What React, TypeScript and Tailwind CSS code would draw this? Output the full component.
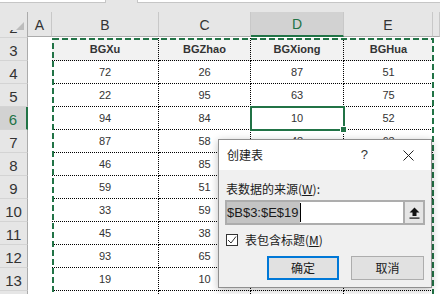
import clsx from "clsx";

const COLS = "grid grid-cols-[28px_24px_107px_92px_93px_89px_1fr]";

const data = [
  [72, 26, 87, 51],
  [22, 95, 63, 75],
  [94, 84, 10, 52],
  [87, 58, 48, 63],
  [46, 85, 31, 72],
  [59, 51, 66, 24],
  [33, 59, 17, 80],
  [45, 38, 92, 41],
  [93, 65, 55, 36],
  [19, 10, 28, 69],
  [64, 77, 12, 90],
];

function RowHead({ n, selected }: { n: number; selected?: boolean }) {
  return (
    <div
      className={clsx(
        "flex items-end justify-center border-b border-[#d4d4d4] text-[15px] leading-[18px]",
        selected
          ? "bg-[#d2d2d2] border-r-2 border-r-[#217346] text-[#217346]"
          : "bg-[#e6e6e6] border-r border-r-[#ababab] text-[#333]"
      )}
    >
      {n}
    </div>
  );
}

function Cell({ children, head, last }: { children?: React.ReactNode; head?: boolean; last?: boolean }) {
  return (
    <div
      className={clsx(
        "flex items-center justify-center border-b border-dotted border-black text-[11px] text-[#333]",
        !last && "border-r",
        head && "bg-[#f2f2f2] font-bold text-[#3a3a3a]"
      )}
    >
      {children}
    </div>
  );
}

function ColHead({ label, selected, edge }: { label?: string; selected?: boolean; edge?: boolean }) {
  return (
    <div
      className={clsx(
        "flex items-center justify-center pt-[2px] text-[14px] border-r",
        selected
          ? "bg-[#d2d2d2] border-b-2 border-b-[#217346] text-[#217346] border-r-[#ababab]"
          : "bg-[#e6e6e6] border-b border-b-[#ababab] text-[#333]",
        edge ? "border-r-[#ababab]" : "border-r-[#c8c8c8]"
      )}
    >
      {label}
    </div>
  );
}

export default function App() {
  return (
    <div className="relative w-[440px] h-[294px] overflow-hidden bg-white font-['Liberation_Sans',Arial,sans-serif]">
      {/* formula bar remnant */}
      <div className="flex h-[12px] bg-[#e6e6e6]">
        <div className="w-[106px] h-[3px] bg-white border-b border-r border-[#c6c6c6]" />
        <div className="ml-[31px] flex-1 h-[3px] bg-white border-b border-l border-[#c6c6c6]" />
      </div>

      {/* column headers */}
      <div className={clsx(COLS, "h-[18px]")}>
        <div className="flex items-end justify-end pr-[3px] pb-[3px] bg-[#e6e6e6] border-r border-b border-[#ababab]">
          <svg width="11" height="11" viewBox="0 0 11 11">
            <polygon points="11,0 11,11 0,11" fill="#bcbcbc" />
          </svg>
        </div>
        <ColHead label="A" />
        <ColHead label="B" />
        <ColHead label="C" />
        <ColHead label="D" selected />
        <ColHead label="E" />
        <ColHead />
      </div>

      {/* row 2, mostly scrolled away */}
      <div className="h-[8px] overflow-hidden">
        <div className={clsx(COLS, "h-[23px] -mt-[15px]")}>
          <RowHead n={2} />
        </div>
      </div>

      {/* row 3: table headers */}
      <div className={clsx(COLS, "h-[23px]")}>
        <RowHead n={3} />
        <div />
        <Cell head>BGXu</Cell>
        <Cell head>BGZhao</Cell>
        <Cell head>BGXiong</Cell>
        <Cell head last>BGHua</Cell>
        <div />
      </div>

      {data.map((r, i) => (
        <div key={i} className={clsx(COLS, "h-[23px]")}>
          <RowHead n={i + 4} selected={i + 4 === 6} />
          <div />
          <Cell>{r[0]}</Cell>
          <Cell>{r[1]}</Cell>
          <Cell>{r[2]}</Cell>
          <Cell last>{r[3]}</Cell>
          <div />
        </div>
      ))}

      {/* copy range marching ants */}
      <svg className="absolute left-[52px] top-[38px]" width="382" height="260">
        <rect x="1" y="1" width="380" height="300" fill="none" stroke="#217346" strokeWidth="2" strokeDasharray="6 3" />
      </svg>

      {/* active cell D6 */}
      <div className="absolute left-[250px] top-[106px] w-[95px] h-[25px] border-2 border-[#217346]">
        <div className="absolute -right-[4px] -bottom-[4px] w-[7px] h-[7px] bg-[#217346] border border-white" />
      </div>

      {/* dialog */}
      <div className="absolute left-[218px] top-[139px] w-[214px] h-[149px] flex flex-col border border-[#8f8f8f] bg-[#f0f0f0] shadow-[0_2px_8px_rgba(0,0,0,0.25)] font-['Noto_Sans_CJK_SC',sans-serif] text-[#1a1a1a]">
        <div className="h-[30px] flex items-center bg-white pl-[8px] pr-[17px] text-[12px]">
          <span className="flex-1">创建表</span>
          <span className="mr-[35px] font-['Liberation_Sans',sans-serif] text-[13px] text-[#333]">?</span>
          <svg width="11" height="11" viewBox="0 0 11 11">
            <path d="M0.5 0.5 L10.5 10.5 M10.5 0.5 L0.5 10.5" stroke="#222" strokeWidth="1" />
          </svg>
        </div>

        <div className="flex-1 flex flex-col px-[6px] pt-[10px]">
          <div className="pl-[1px] text-[12px] leading-[17px]">
            表数据的来源(<span className="underline">W</span>):
          </div>

          <div className="mt-[3px] flex h-[25px] border-2 border-[#adadad] bg-white">
            <div className="flex-1 flex items-center">
              <span className="bg-[#c4c4c4] h-[21px] leading-[21px] pr-[1px] text-[13px] font-['Liberation_Sans',sans-serif] text-[#1a1a1a]">
                $B$3:$E$19
              </span>
              <span className="w-[1px] h-[19px] bg-black" />
            </div>
            <div className="w-[20px] flex items-center justify-center border-l-2 border-[#adadad] bg-[#e5e5e5]">
              <svg width="11" height="12" viewBox="0 0 11 12">
                <polygon points="5.5,0.5 10.5,5.5 7.5,5.5 7.5,9 3.5,9 3.5,5.5 0.5,5.5" fill="#111" />
                <rect x="0.5" y="10.5" width="10" height="1.2" fill="#111" />
              </svg>
            </div>
          </div>

          <div className="mt-[8px] ml-[1px] flex items-center gap-[7px] h-[13px]">
            <div className="w-[12px] h-[12px] flex items-center justify-center border border-[#333] bg-white">
              <svg width="10" height="10" viewBox="0 0 10 10">
                <path d="M1 5 L4 8 L9 1.5" fill="none" stroke="#333" strokeWidth="1" />
              </svg>
            </div>
            <span className="text-[12px] leading-[13px]">
              表包含标题(<span className="underline">M</span>)
            </span>
          </div>

          <div className="mt-[10px] flex justify-end gap-[12px] pr-[1px]">
            <button className="w-[72px] h-[24px] border-2 border-[#0078d7] bg-[#e1e1e1] text-[12px] text-[#1a1a1a]">
              确定
            </button>
            <button className="w-[73px] h-[24px] border border-[#adadad] bg-[#e1e1e1] text-[12px] text-[#1a1a1a]">
              取消
            </button>
          </div>
        </div>
      </div>
    </div>
  );
}
